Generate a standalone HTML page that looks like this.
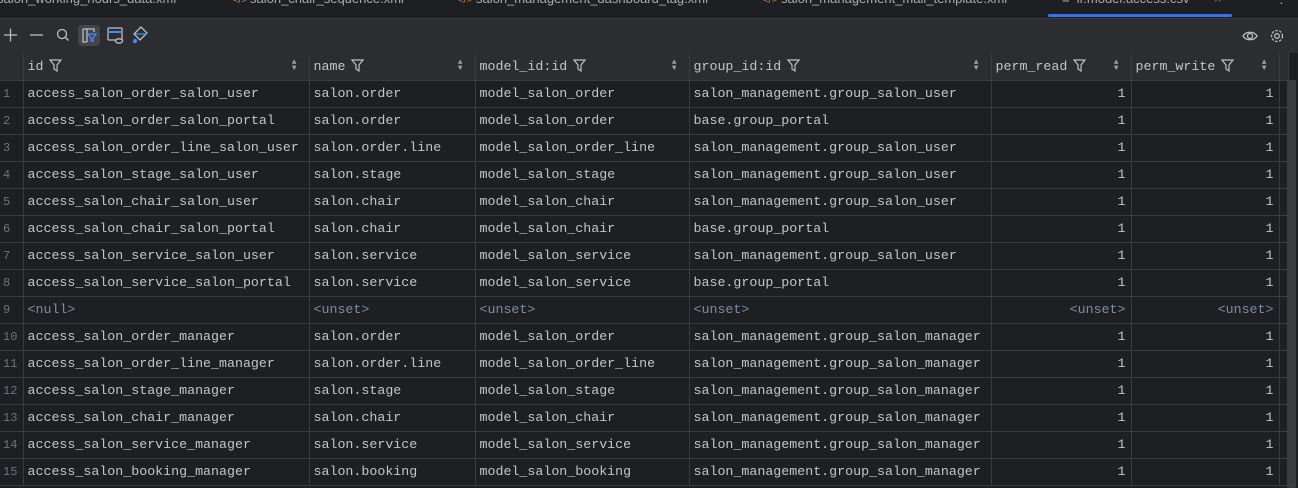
<!DOCTYPE html>
<html style="overflow:hidden;width:1298px;height:488px"><head><meta charset="utf-8"><style>
*{margin:0;padding:0;box-sizing:border-box}
body{width:1298px;height:488px;overflow:hidden;background:#1e1f22;font-family:"Liberation Mono",monospace;font-size:13.3px;color:#c3c5ca;position:relative}
.tabs{position:absolute;left:0;top:0;width:1298px;height:19px;background:#1e1f22;border-bottom:1px solid #393b40;overflow:hidden;font-family:"Liberation Sans",sans-serif;font-size:13px;color:#a9abb0}
.tabs span{position:absolute;top:-9px;white-space:nowrap}
.tabs .ic{color:#c77d3a;font-size:11px;top:-6px}
.ul{position:absolute;left:1048px;top:14px;width:184px;height:3px;background:#3574f0;border-radius:2px}
.tb{position:absolute;left:0;top:19px;width:1298px;height:34px;background:#2b2d30}
table{position:absolute;left:0;top:53px;border-collapse:collapse;table-layout:fixed}
td,th{height:27px;border-right:1px solid #393b40;border-bottom:1px solid #393b40;white-space:nowrap;overflow:hidden;padding:0 4px;text-align:left;font-weight:normal}
th{background:#2b2d30;position:relative;color:#c3c5ca}
th .f{display:inline-block;margin-left:6px;vertical-align:-2px}
th .s{position:absolute;right:12px;top:7px;font-size:8px;color:#9a9da3;line-height:6px}
td.n{color:#6f737a;padding:0 0 0 3px;font-size:12px}
td.r{text-align:right;padding-right:5px}
.u{color:#7a8ca8}
.sb{position:absolute;left:1287px;top:80px;width:9px;height:408px;background:#3a3c40;border-radius:2px}
</style></head><body>
<div class="tabs">
<span style="left:-3px">salon_working_hours_data.xml</span>
<span class="ic" style="left:232px">&lt;/&gt;</span><span style="left:250px">salon_chair_sequence.xml</span>
<span class="ic" style="left:457px">&lt;/&gt;</span><span style="left:476px">salon_management_dashboard_tag.xml</span>
<span class="ic" style="left:762px">&lt;/&gt;</span><span style="left:781px">salon_management_mail_template.xml</span>
<span style="left:1062px">≡&nbsp;&nbsp;ir.model.access.csv</span>
<span style="left:1214px;color:#6f737a">×</span>
<span style="left:1249px;color:#6f737a">·</span><span style="left:1275px">⋮</span>
<div class="ul"></div>
</div>
<div class="tb">
<svg width="300" height="34" style="position:absolute;left:0;top:0" fill="none" stroke="#bcbec4" stroke-width="1.3">
<path d="M4 16h13M10.5 9.5v13"/>
<path d="M30 16h13"/>
<circle cx="62" cy="15" r="4.5"/><path d="M65 18l3.5 3.5"/>
<rect x="78" y="6" width="22" height="21" rx="4" fill="#43454a" stroke="none"/>
<path d="M83 10h11v3M83 10v13h4M87 10v13"/>
<path d="M88 15h8l-3 4v3.5l-2-1v-2.5z" stroke="#3d8ef5"/>
<rect x="108" y="9" width="14" height="12" rx="1"/><path d="M108 13h14" stroke="#3d8ef5" stroke-width="2"/>
<ellipse cx="119" cy="22" rx="3.5" ry="2.2" fill="#2b2d30"/>
<path d="M141 8l-7 7 6 6 7-7z"/><path d="M135 15h12" stroke="#3d8ef5"/><circle cx="135" cy="22" r="1.5" fill="#3d8ef5" stroke="#3d8ef5"/>
</svg>
<svg width="50" height="34" style="position:absolute;left:1238px;top:0" fill="none" stroke="#bcbec4" stroke-width="1.3">
<path d="M5 17c3-5 11-5 14 0c-3 5-11 5-14 0z"/><circle cx="12" cy="17" r="2.5"/>
<circle cx="39" cy="17" r="2.3"/><circle cx="39" cy="17" r="5.5" stroke-dasharray="2.5 1.5"/>
</svg>
</div>
<table>
<colgroup><col style="width:23px"><col style="width:286px"><col style="width:166px"><col style="width:214px"><col style="width:302px"><col style="width:140px"><col style="width:148px"><col style="width:6px"></colgroup>
<tr><th></th><th>id<svg class="f" width="13" height="13" fill="none" stroke="#bcbec4" stroke-width="1.2"><path d="M1 1h11l-4 5v6l-3-2v-4z"/></svg><span class="s">▲<br>▼</span></th>
<th>name<svg class="f" width="13" height="13" fill="none" stroke="#bcbec4" stroke-width="1.2"><path d="M1 1h11l-4 5v6l-3-2v-4z"/></svg><span class="s">▲<br>▼</span></th>
<th>model_id:id<svg class="f" width="13" height="13" fill="none" stroke="#bcbec4" stroke-width="1.2"><path d="M1 1h11l-4 5v6l-3-2v-4z"/></svg><span class="s">▲<br>▼</span></th>
<th>group_id:id<svg class="f" width="13" height="13" fill="none" stroke="#bcbec4" stroke-width="1.2"><path d="M1 1h11l-4 5v6l-3-2v-4z"/></svg><span class="s">▲<br>▼</span></th>
<th>perm_read<svg class="f" width="13" height="13" fill="none" stroke="#bcbec4" stroke-width="1.2"><path d="M1 1h11l-4 5v6l-3-2v-4z"/></svg><span class="s">▲<br>▼</span></th>
<th>perm_write<svg class="f" width="13" height="13" fill="none" stroke="#bcbec4" stroke-width="1.2"><path d="M1 1h11l-4 5v6l-3-2v-4z"/></svg><span class="s">▲<br>▼</span></th><th></th></tr>
<tr><td class="n">1</td><td>access_salon_order_salon_user</td><td>salon.order</td><td>model_salon_order</td><td>salon_management.group_salon_user</td><td class="r">1</td><td class="r">1</td><td></td></tr>
<tr><td class="n">2</td><td>access_salon_order_salon_portal</td><td>salon.order</td><td>model_salon_order</td><td>base.group_portal</td><td class="r">1</td><td class="r">1</td><td></td></tr>
<tr><td class="n">3</td><td>access_salon_order_line_salon_user</td><td>salon.order.line</td><td>model_salon_order_line</td><td>salon_management.group_salon_user</td><td class="r">1</td><td class="r">1</td><td></td></tr>
<tr><td class="n">4</td><td>access_salon_stage_salon_user</td><td>salon.stage</td><td>model_salon_stage</td><td>salon_management.group_salon_user</td><td class="r">1</td><td class="r">1</td><td></td></tr>
<tr><td class="n">5</td><td>access_salon_chair_salon_user</td><td>salon.chair</td><td>model_salon_chair</td><td>salon_management.group_salon_user</td><td class="r">1</td><td class="r">1</td><td></td></tr>
<tr><td class="n">6</td><td>access_salon_chair_salon_portal</td><td>salon.chair</td><td>model_salon_chair</td><td>base.group_portal</td><td class="r">1</td><td class="r">1</td><td></td></tr>
<tr><td class="n">7</td><td>access_salon_service_salon_user</td><td>salon.service</td><td>model_salon_service</td><td>salon_management.group_salon_user</td><td class="r">1</td><td class="r">1</td><td></td></tr>
<tr><td class="n">8</td><td>access_salon_service_salon_portal</td><td>salon.service</td><td>model_salon_service</td><td>base.group_portal</td><td class="r">1</td><td class="r">1</td><td></td></tr>
<tr><td class="n">9</td><td class="u">&lt;null&gt;</td><td class="u">&lt;unset&gt;</td><td class="u">&lt;unset&gt;</td><td class="u">&lt;unset&gt;</td><td class="r u">&lt;unset&gt;</td><td class="r u">&lt;unset&gt;</td><td></td></tr>
<tr><td class="n">10</td><td>access_salon_order_manager</td><td>salon.order</td><td>model_salon_order</td><td>salon_management.group_salon_manager</td><td class="r">1</td><td class="r">1</td><td></td></tr>
<tr><td class="n">11</td><td>access_salon_order_line_manager</td><td>salon.order.line</td><td>model_salon_order_line</td><td>salon_management.group_salon_manager</td><td class="r">1</td><td class="r">1</td><td></td></tr>
<tr><td class="n">12</td><td>access_salon_stage_manager</td><td>salon.stage</td><td>model_salon_stage</td><td>salon_management.group_salon_manager</td><td class="r">1</td><td class="r">1</td><td></td></tr>
<tr><td class="n">13</td><td>access_salon_chair_manager</td><td>salon.chair</td><td>model_salon_chair</td><td>salon_management.group_salon_manager</td><td class="r">1</td><td class="r">1</td><td></td></tr>
<tr><td class="n">14</td><td>access_salon_service_manager</td><td>salon.service</td><td>model_salon_service</td><td>salon_management.group_salon_manager</td><td class="r">1</td><td class="r">1</td><td></td></tr>
<tr><td class="n">15</td><td>access_salon_booking_manager</td><td>salon.booking</td><td>model_salon_booking</td><td>salon_management.group_salon_manager</td><td class="r">1</td><td class="r">1</td><td></td></tr>
</table>
<div class="sb"></div>
</body></html>
